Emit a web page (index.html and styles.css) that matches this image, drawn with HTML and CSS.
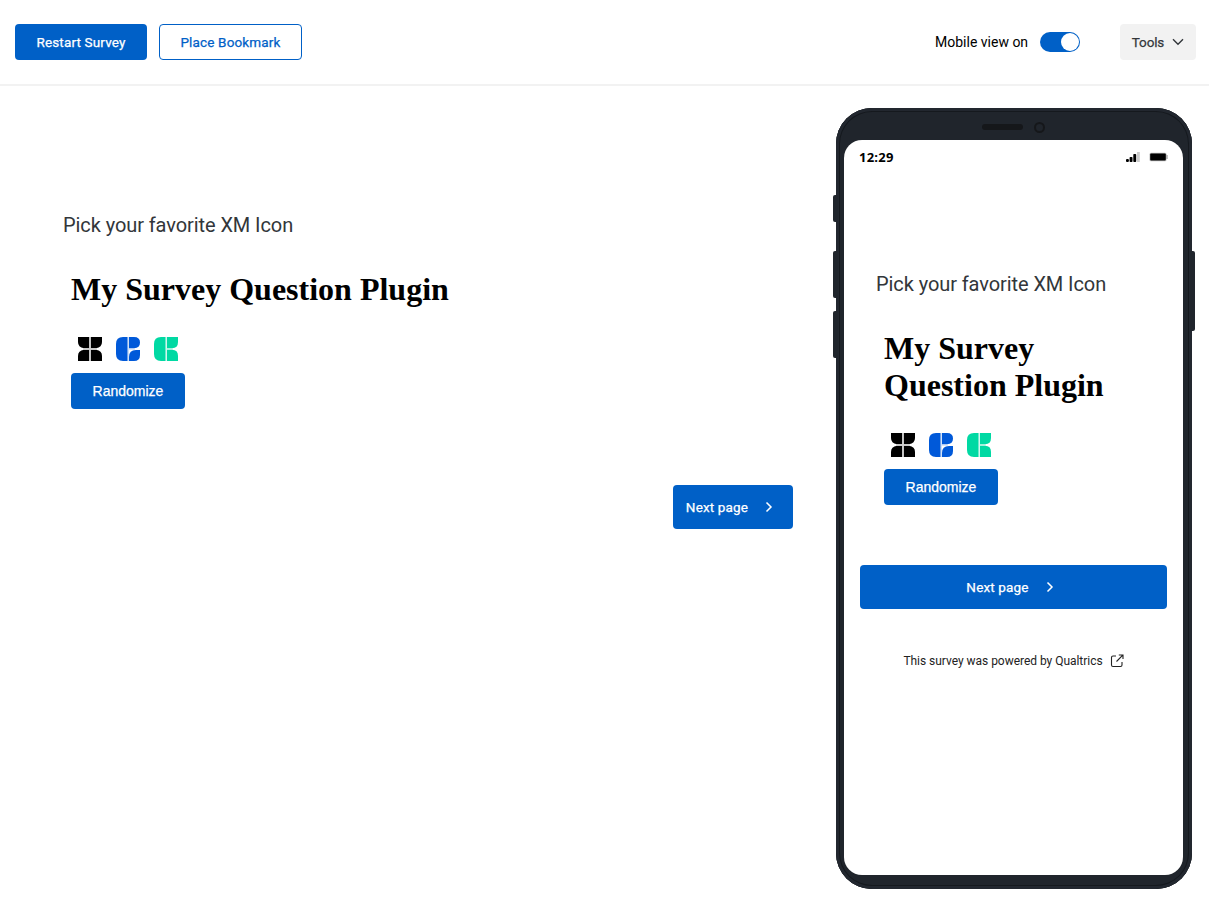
FILE: index.html
```html
<!DOCTYPE html>
<html lang="en">
<head>
<meta charset="utf-8">
<title>Survey preview</title>
<link rel="stylesheet" href="styles.css">
</head>
<body>
<svg class="defs" aria-hidden="true">
  <symbol id="chevron" viewBox="0 0 8 12"><path d="M1.5 1.5 6 6 1.5 10.5" fill="none" stroke="currentColor" stroke-width="1.5"/></symbol>
  <symbol id="xm" viewBox="0 0 24 24">
    <path d="M0 0H11.3V11.3H6Q0 10.5 0 5ZM12.7 0H24V5Q24 10.5 18 11.3H12.7ZM0 24H11.3V12.7H6Q0 13.5 0 19ZM12.7 24H24V19Q24 13.5 18 12.7H12.7Z" fill="#000"/>
    <path d="M12 0V24M5 12H19" stroke="#ccc" stroke-width="1.4"/>
  </symbol>
  <symbol id="cx" viewBox="0 0 24 24">
    <path d="M11.5 0V24H7Q0 24 0 17V7Q0 0 7 0ZM13 0H18Q24 0 24 5.5Q24 11.2 18 11.2H13ZM13 24V20Q13 13 20 13H24V18Q24 24 18 24Z" fill="#0059d9"/>
    <path d="M12.2 0V24M12.5 12.1H19" stroke="#0059d9" stroke-opacity=".2" stroke-width="1.4"/>
  </symbol>
  <symbol id="ex" viewBox="0 0 24 24">
    <path d="M11.5 0V24H7Q0 24 0 17V7Q0 0 7 0ZM13 0H24V5Q24 11.2 18 11.2H13ZM13 24V12.8H18Q24 12.8 24 19V24Z" fill="#00d9a3"/>
    <path d="M12.2 0V24M12.5 12H19" stroke="#00d9a3" stroke-opacity=".2" stroke-width="1.4"/>
  </symbol>
</svg>
<header class="toolbar">
  <button class="btn restart">Restart Survey</button>
  <button class="btn bookmark">Place Bookmark</button>
  <span class="mobile-label">Mobile view on</span>
  <span class="toggle"><span class="knob"></span></span>
  <button class="btn tools">Tools<svg viewBox="0 0 12 8"><path d="M1 1.2 6 6.2 11 1.2" fill="none" stroke="currentColor" stroke-width="1.4"/></svg></button>
</header>
<main class="preview">
  <section class="desktop">
    <p class="question">Pick your favorite XM Icon</p>
    <div class="plugin">
      <h1>My Survey Question Plugin</h1>
      <div class="icons"><svg><use href="#xm"/></svg><svg><use href="#cx"/></svg><svg><use href="#ex"/></svg></div>
      <button class="btn randomize">Randomize</button>
    </div>
    <button class="btn next"><span>Next page</span><svg><use href="#chevron"/></svg></button>
  </section>
  <section class="phone">
    <i class="key key-1"></i><i class="key key-2"></i><i class="key key-3"></i><i class="key key-4"></i>
    <div class="body">
      <div class="speaker"><i class="slot"></i><i class="camera"></i></div>
      <div class="screen">
        <div class="status">
          <b>12:29</b>
          <svg class="signal" viewBox="0 0 14 10"><path d="M11 0h2.8v10H11z" fill="#ccc"/><rect y="7" width="2.9" height="3" rx="1"/><rect x="3.6" y="5" width="2.9" height="5" rx=".8"/><rect x="7.3" y="2" width="2.9" height="8" rx=".8"/></svg>
          <svg class="battery" viewBox="0 0 19 10"><rect x=".5" y=".7" width="17" height="8.6" rx="1.5" fill="#bbb"/><path d="M17.5 3h1v4h-1z" fill="#888"/><rect x="1.2" y="1.5" width="15.6" height="7" rx="1"/></svg>
        </div>
        <p class="question">Pick your favorite XM Icon</p>
        <div class="plugin">
          <h1>My Survey Question Plugin</h1>
          <div class="icons"><svg><use href="#xm"/></svg><svg><use href="#cx"/></svg><svg><use href="#ex"/></svg></div>
          <button class="btn randomize">Randomize</button>
        </div>
        <button class="btn next"><span>Next page</span><svg><use href="#chevron"/></svg></button>
        <div class="powered"><span>This survey was powered by Qualtrics</span><svg viewBox="0 0 14 14"><path d="M6 2H3Q1.5 2 1.5 3.5V11Q1.5 12.5 3 12.5H10.5Q12 12.5 12 11V8M6.5 7.5 12.5 1.3M8.8 1H13V5" fill="none" stroke="currentColor" stroke-width="1.1"/></svg></div>
      </div>
    </div>
  </section>
</main>
</body>
</html>
```
FILE: styles.css
```css
* { box-sizing: border-box; }
body { margin: 0; height: 906px; overflow: hidden; background: #fff; font-family: Roboto, sans-serif; color: #000; }
.defs { display: none; }
.toolbar { display: flex; align-items: center; height: 86px; padding: 0 13px 0 15px; border-bottom: 2px solid #f2f2f2; }
.btn { display: flex; align-items: center; justify-content: center; height: 36px; padding: 0; border: 0; border-radius: 4px; background: #0060c7; color: #fff; font: 400 13.5px Roboto, sans-serif; letter-spacing: .15px; -webkit-text-stroke: .25px currentColor; white-space: nowrap; }
.restart { width: 132px; }
.bookmark { width: 143px; margin-left: 12px; border: 1px solid #0060c7; background: #fff; color: #0060c7; }
.mobile-label { width: 93px; margin-left: auto; font-size: 14px; white-space: nowrap; }
.toggle { display: flex; justify-content: flex-end; width: 40px; height: 20px; margin: 0 40px 0 12px; padding: 1px; border-radius: 10px; background: #0060c7; }
.knob { width: 18px; height: 18px; border-radius: 50%; background: #fff; }
.tools { width: 76px; gap: 8px; background: #f2f2f2; color: #32363a; font-size: 13.5px; letter-spacing: -.15px; }
.tools svg { width: 12px; height: 8px; }
.preview { display: flex; height: 820px; }
.desktop { width: 793px; margin-right: 43px; padding: 126px 0 0 63px; }
.question { margin: 0; font-size: 20px; line-height: 26px; letter-spacing: -.08px; color: #32363a; white-space: nowrap; }
.plugin { padding: 33px 0 0 8px; }
.plugin h1 { margin: 0; font: bold 32px/37px "Liberation Serif", serif; color: #000; }
.icons { display: flex; gap: 14px; padding: 29px 0 0 7px; }
.icons svg { width: 24px; height: 24px; }
.randomize { width: 114px; margin-top: 12px; font: 14px "Liberation Sans", sans-serif; letter-spacing: 0; }
.next { width: 120px; height: 44px; }
.next svg { width: 8px; height: 12px; margin-left: 17px; }
.desktop .next { margin: 76px 0 0 auto; padding-right: 7px; }
.phone { position: relative; width: 355.5px; height: 781px; margin-top: 22px; }
.body { width: 355.5px; height: 781px; padding: 0 8px; border-radius: 36px; background: #20252c; box-shadow: inset 0 0 0 3px #22272f, inset 0 0 0 4px #15191e; }
.speaker { display: flex; align-items: center; height: 32px; padding: 6px 0 0 138px; gap: 11px; }
.slot { width: 41px; height: 6px; border-radius: 3px; background: #15171a; }
.camera { width: 11px; height: 11px; border: 2px solid #15171a; border-radius: 50%; }
.screen { width: 339px; height: 735px; padding: 8px 16px 0; border-radius: 18px; background: #fff; }
.status { display: flex; align-items: center; height: 18px; margin-left: -1px; }
.status b { width: 35px; margin-right: auto; font: bold 13px "Open Sans", sans-serif; letter-spacing: .25px; }
.signal { width: 14px; height: 10px; }
.battery { width: 19px; height: 10px; margin: 0 -1px 0 9px; }
.screen .question { margin: 105px 0 0 16px; }
.screen .plugin { padding-left: 24px; }
.screen h1 { width: 230px; }
.screen .next { width: 307px; margin-top: 60px; padding-right: 7px; }
.powered { display: flex; align-items: center; justify-content: center; gap: 7px; margin-top: 44px; font-size: 12px; letter-spacing: -.03px; color: #222; white-space: nowrap; }
.powered span { padding-top: 1px; }
.powered svg { width: 14px; height: 14px; }
.key { position: absolute; left: -3px; width: 5px; border-radius: 2px; background: #20252c; }
.key-1 { top: 87px; height: 27px; }
.key-2 { top: 143px; height: 47px; }
.key-3 { top: 203px; height: 47px; }
.key-4 { top: 143px; left: auto; right: -3px; height: 80px; }
```
